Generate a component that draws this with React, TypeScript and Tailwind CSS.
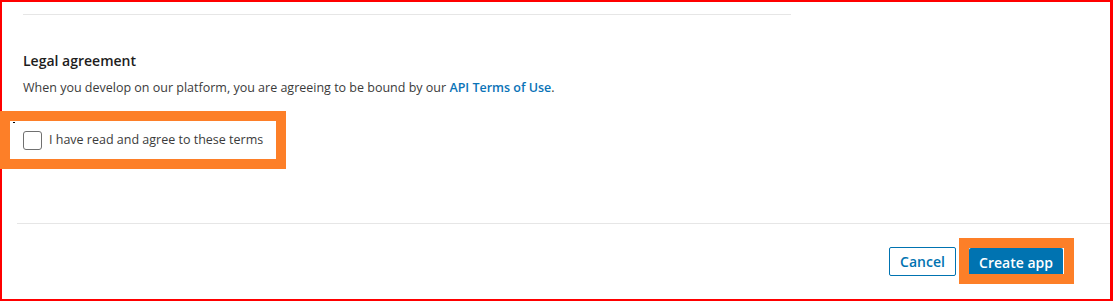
export default function App() {
  return (
    <div className="relative w-[1113px] h-[301px] overflow-hidden bg-white font-['Open_Sans',sans-serif]">
      <div className="pl-[23px] pt-[14px]">
        <div className="w-[768px] border-t border-[#e6e6e6]" />
        <h2 className="mt-[36px] text-[14px] leading-[20px] font-semibold text-[#1d1d1d]">Legal agreement</h2>
        <p className="mt-[7px] text-[12.5px] leading-[20px] text-[#3b3b3b]">
          When you develop on our platform, you are agreeing to be bound by our{" "}
          <a className="font-semibold text-[#0a73b7]">API Terms of Use</a>.
        </p>
        <label className="mt-[32px] flex items-center gap-[7px] h-[20px]">
          <span className="block w-[19px] h-[19px] rounded-[3px] border-[1.5px] border-[#707070] bg-white" />
          <span className="text-[12.5px] leading-[20px] text-[#3b3b3b]">I have read and agree to these terms</span>
        </label>
      </div>

      <div className="ml-[17px] mt-[73px] border-t border-[#e6e6e6]" />

      <div className="flex justify-end gap-[13px] pr-[50px] pt-[23px]">
        <button className="h-[29px] w-[67px] rounded-[2px] border border-[#0073b1] text-[14px] font-semibold text-[#0073b1]">
          Cancel
        </button>
        <button className="h-[28px] w-[94px] mt-[1px] rounded-[2px] bg-[#0073b1] text-[14px] font-semibold text-white">
          Create app
        </button>
      </div>

      {/* screenshot frame + annotation boxes */}
      <div className="pointer-events-none absolute inset-0 border-t-2 border-l-2 border-r-[3px] border-b-2 border-[#ff0000]" />
      <div className="pointer-events-none absolute left-0 top-[111px] w-[286px] h-[58px] border-[10px] border-[#fd7f28]" />
      <div className="pointer-events-none absolute left-[13px] top-[122px] w-[2px] h-[1px] bg-black" />
      <div className="pointer-events-none absolute left-[959px] top-[238px] w-[115px] h-[46px] border-[10px] border-[#fd7f28]" />
    </div>
  );
}
